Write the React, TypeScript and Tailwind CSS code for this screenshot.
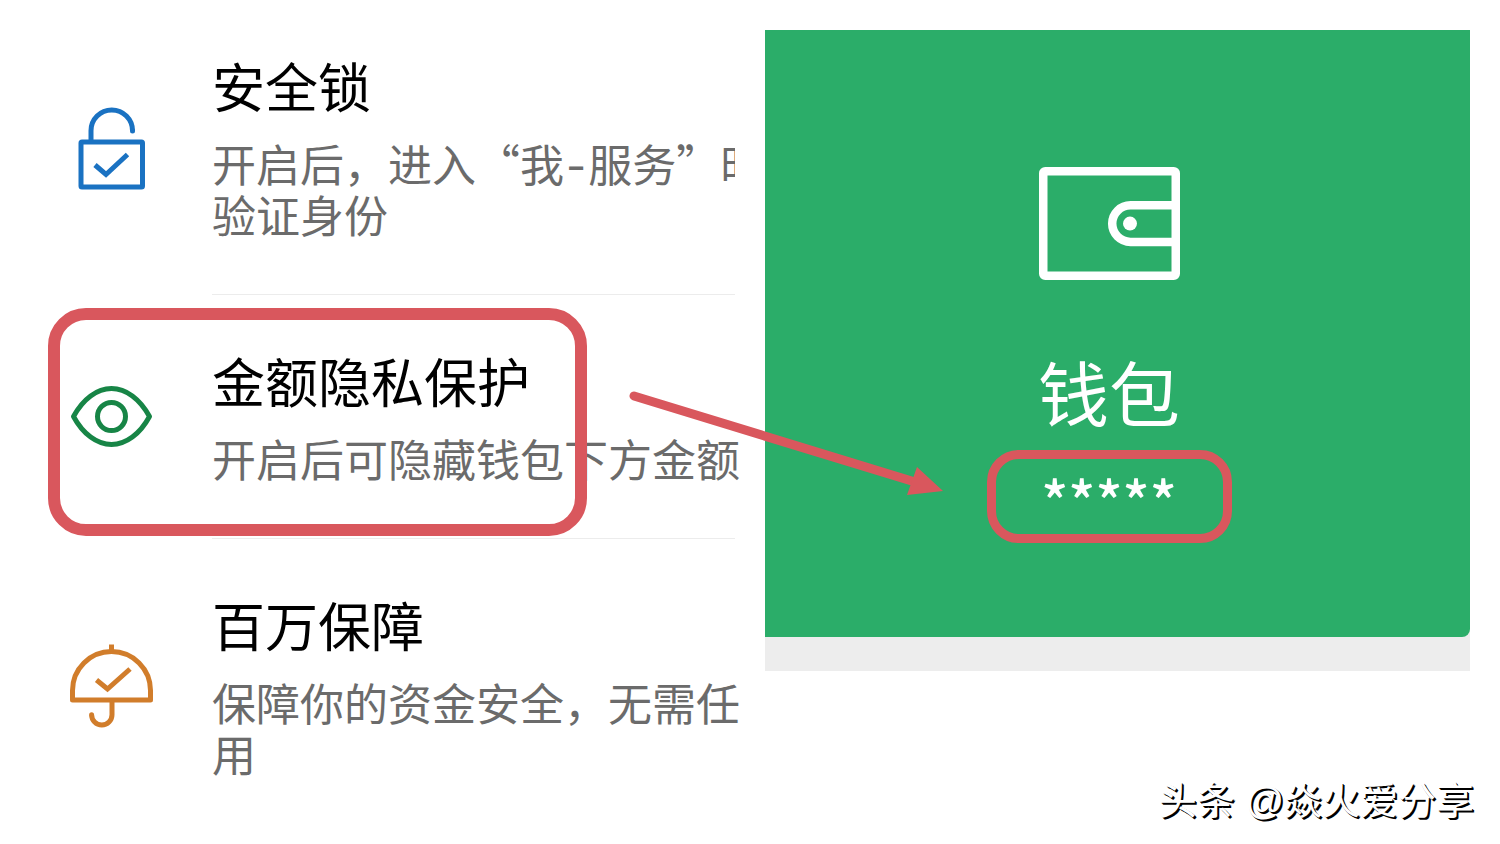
import type { ReactNode } from "react";

interface SecurityItem {
  title: string;
  lines: ReactNode[];
  icon: ReactNode;
  highlighted?: boolean;
}

function LockIcon() {
  return (
    <svg viewBox="0 0 84 84" fill="none" strokeWidth="5" className="size-[84px] shrink-0 stroke-[#1a72c2]" aria-hidden="true">
      <rect x="12" y="36" width="61.5" height="45" rx="1" />
      <path d="M22 36V24.750a20.750 20.750 0 0 1 41.500 0" />
      <path d="M63.500 24.500v.5" strokeLinecap="round" />
      <path d="M26 59l11 9.500 21.500-20" />
    </svg>
  );
}

function EyeIcon() {
  return (
    <svg viewBox="0 0 84 84" fill="none" strokeWidth="5" strokeLinejoin="round" className="size-[84px] shrink-0 stroke-[#178546]" aria-hidden="true">
      <path d="M4.500 41.500C14 24 28 13.500 42.500 13.500S71 24 80.500 41.500C71 59 57 69.500 42.500 69.500S14 59 4.500 41.500Z" />
      <circle cx="42.500" cy="41.500" r="14" />
    </svg>
  );
}

function UmbrellaIcon() {
  return (
    <svg viewBox="0 0 84 84" fill="none" strokeWidth="5" strokeLinejoin="round" className="size-[84px] shrink-0 stroke-[#d17d2b]" aria-hidden="true">
      <path d="M3.500 56V46.500a39 39 0 0 1 78 0v9.500z" />
      <path d="M42.500 .5v7" />
      <path d="M43 56v14.700a10.200 10.200 0 0 1-20.400 0v1.500" />
      <path d="M27.500 36l11 9L61 25" strokeLinejoin="miter" />
    </svg>
  );
}

function WalletIcon() {
  return (
    <svg viewBox="0 0 141 113" fill="none" stroke="white" strokeWidth="8.5" className="h-[113px] w-[141px]" aria-hidden="true">
      <rect x="4.250" y="4.250" width="132.500" height="104.500" rx="2" />
      <path d="M136 38.300H91.500a18.300 18.300 0 0 0 0 36.600H136" />
      <circle cx="91" cy="56.600" r="7" fill="white" stroke="none" />
    </svg>
  );
}

const items: SecurityItem[] = [
  {
    title: "安全锁",
    lines: [
      <span className="block overflow-x-clip">
        开启后，进入“我<span className="mx-0.5 font-[Inter] leading-none">-</span>服务”时
      </span>,
      "验证身份",
    ],
    icon: <LockIcon />,
  },
  {
    title: "金额隐私保护",
    lines: ["开启后可隐藏钱包下方金额"],
    icon: <EyeIcon />,
    highlighted: true,
  },
  {
    title: "百万保障",
    lines: ["保障你的资金安全，无需任", "用"],
    icon: <UmbrellaIcon />,
  },
];

function SecurityRow({ item, last }: { item: SecurityItem; last: boolean }) {
  return (
    <li className="relative flex items-center gap-[59px] pl-[39px]">
      {item.icon}
      <div className={`min-w-0 flex-1 whitespace-nowrap pt-[55px] pb-[54px] ${last ? "" : "border-b border-[#ececec]"}`}>
        <h2 className="text-[53px] leading-[60px] text-black">{item.title}</h2>
        <p className="mt-[23px] text-[44px] leading-[51px] text-[#6b6b6b]">
          {item.lines.map((line, i) => (
            <span key={i} className="block">{line}</span>
          ))}
        </p>
      </div>
      {item.highlighted && (
        <div className="absolute top-[13px] left-[18px] h-[228px] w-[539px] rounded-[38px] border-[12px] border-[#d9575d]" />
      )}
    </li>
  );
}

export default function App() {
  return (
    <main
      lang="zh-CN"
      className="grid min-h-screen grid-cols-2 gap-[30px] bg-white px-[30px] font-['Noto_Sans_CJK_SC',sans-serif]"
    >
      <ul>
        {items.map((item, i) => (
          <SecurityRow key={item.title} item={item} last={i === items.length - 1} />
        ))}
      </ul>

      <div className="flex flex-col pt-[30px]">
        <section className="relative bg-[#ededed] pb-[34px]">
          <div className="flex flex-col items-center rounded-br-lg bg-[#2bad69] pt-[137px] pr-[17px] pb-[94px] text-white">
            <WalletIcon />
            <h2 className="mt-[68px] text-[71px] leading-[84px]">钱包</h2>
            <div className="mt-[18px] h-[93px] w-[245px] rounded-[32px] border-[9px] border-[#d9575d] text-center text-[56px] leading-[80px] font-medium">
              *****
            </div>
          </div>
          {/* arrow from the setting to the hidden amount */}
          <svg viewBox="0 0 330 120" className="absolute top-[355px] left-[-140px] h-[120px] w-[330px]" aria-hidden="true">
            <path d="M9 11L290 97" stroke="#d9575d" strokeWidth="9" strokeLinecap="round" />
            <path d="M292 82L318 106L282 110Z" fill="#d9575d" />
          </svg>
        </section>
        <p className="mt-auto -mr-1 self-end pb-4 font-['Liberation_Sans','Noto_Sans_CJK_SC',sans-serif] text-[38px] leading-[54px] text-white [text-shadow:1px_1px_0_#000,2px_2px_0_#000]">
          头条 @焱火爱分享
        </p>
      </div>
    </main>
  );
}
